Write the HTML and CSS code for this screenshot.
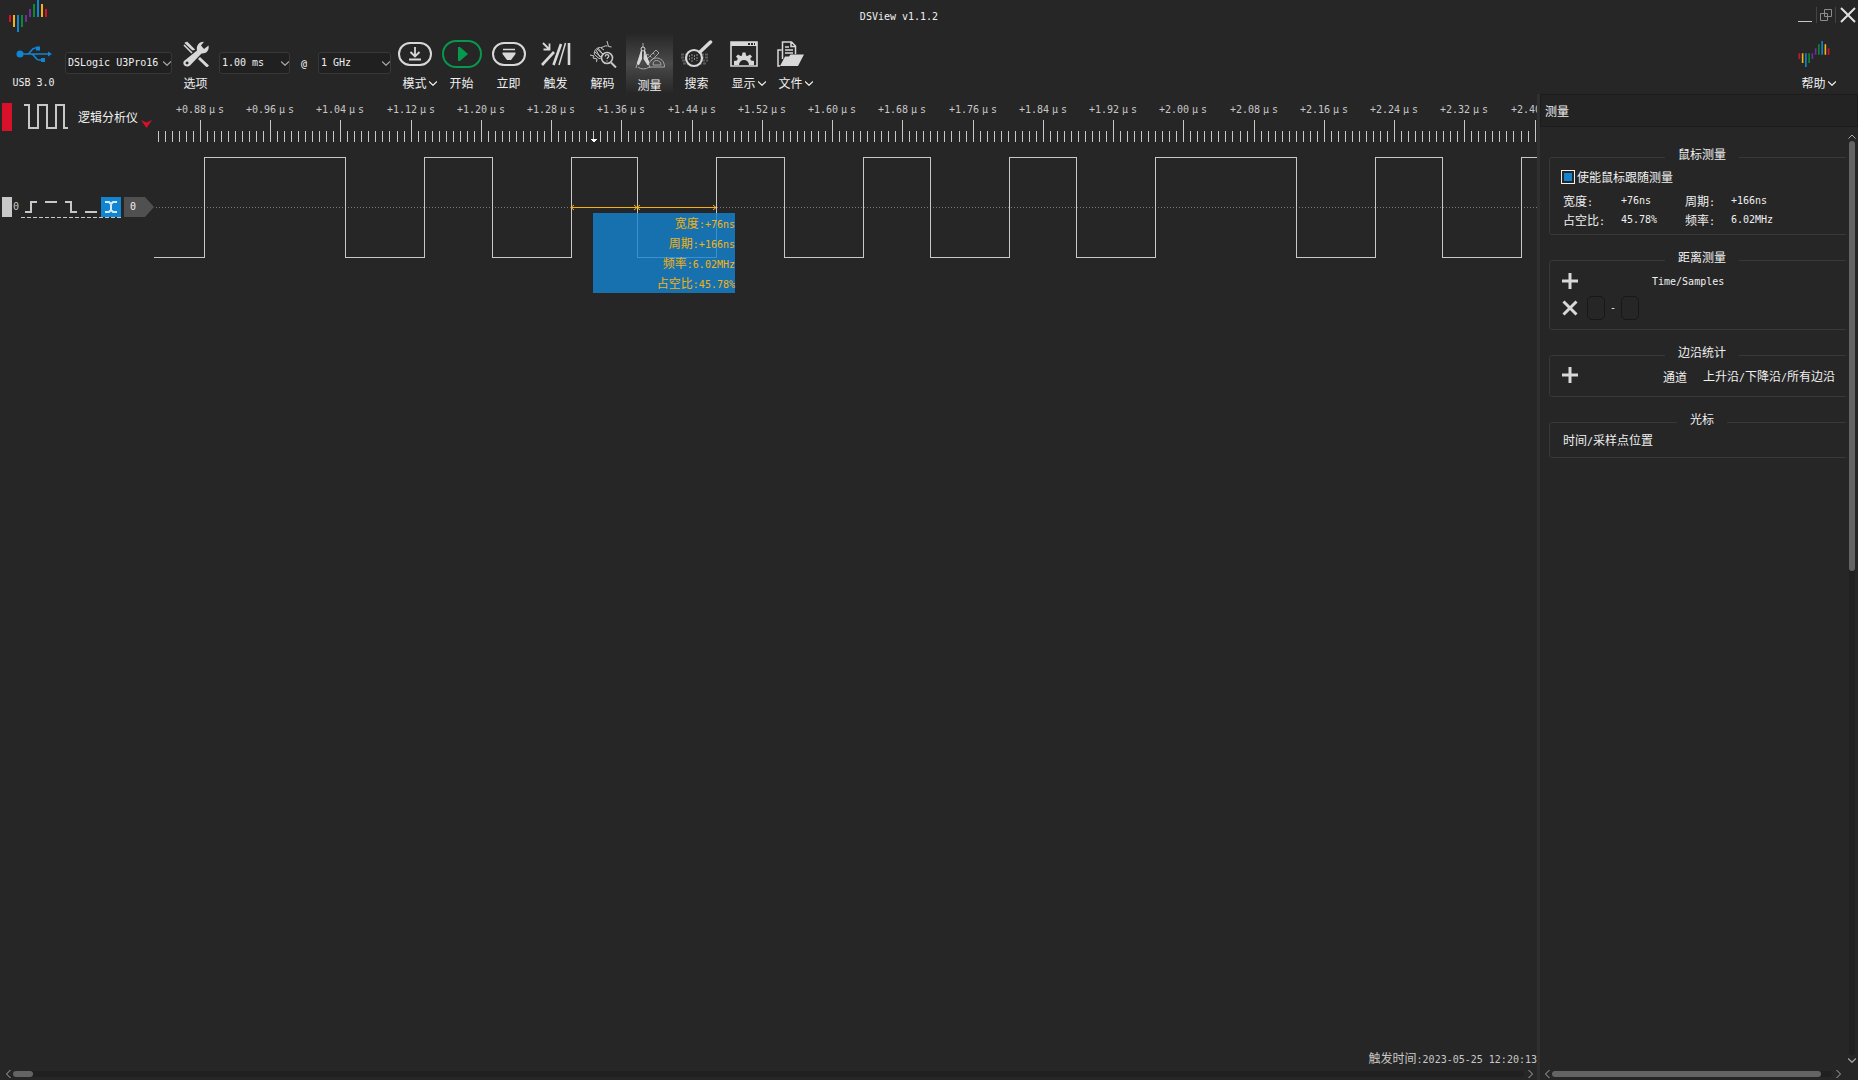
FILE: index.html
```html
<!DOCTYPE html>
<html lang="zh-CN">
<head>
<meta charset="utf-8">
<title>DSView v1.1.2</title>
<link rel="stylesheet" href="styles.css">
</head>
<body>
<svg class="defs" aria-hidden="true">
  <symbol id="logo" viewBox="0 0 38 32">
    <path fill="#d8112a" d="M0 15h2v7H0zM36 9h2v8h-2z"/>
    <path fill="#f5b11a" d="M4 15h2v12H4zM32 4h2v13h-2z"/>
    <path fill="#1185d1" d="M8 15h2v17H8zM28 0h2v17h-2z"/>
    <path fill="#0b8a2e" d="M12 15h2v12h-2zM24 4h2v13h-2z"/>
    <path fill="#6b2fa0" d="M16 15h2v7h-2zM20 9h2v8h-2z"/>
  </symbol>
  <symbol id="chev" viewBox="0 0 8 5"><path d="M0 .5 4 4.300 8 .5" fill="none" stroke="currentColor" stroke-width="1.200"/></symbol>
  <symbol id="plus" viewBox="0 0 16 16"><path d="M8 0v16M0 8h16" fill="none" stroke="#d8d8d8" stroke-width="3"/></symbol>
</svg>

<header class="titlebar">
  <svg class="app-logo" width="38" height="32"><use href="#logo"/></svg>
  <h1 class="n">DSView v1.1.2</h1>
  <div class="win-controls">
    <button class="win" aria-label="最小化"><svg width="14" height="16"><path d="M0 14.500h14" stroke="#c8c8c8"/></svg></button>
    <button class="win restore" aria-label="还原"><svg width="12" height="12" fill="none" stroke="#8c8c8c"><path d="M4.500 .5h7v7h-7zM.5 4.500h7v7h-7z"/></svg></button>
    <button class="win" aria-label="关闭"><svg width="16" height="16"><path d="M1 1l14 14M15 1 1 15" stroke="#e0e0e0" stroke-width="2"/></svg></button>
  </div>
</header>

<nav class="toolbar">
  <button class="tool">
    <span class="ico"><svg width="36" height="18" fill="none" stroke="#1185d1" stroke-width="1.500"><circle cx="4" cy="9" r="3.500" fill="#1185d1" stroke="none"/><path d="M4 9h29M11 9c4 0 4-6 8-6h2M15 9c4 0 4 6 8 6h2"/><path d="M32 6.500v5l4-2.500zM20 1.500h4v4h-4zM25 13h4v4h-4z" fill="#1185d1" stroke="none"/></svg></span>
    <span class="lbl n">USB 3.0</span>
  </button>
  <span class="combo device"><select aria-label="设备"><option>DSLogic U3Pro16</option></select><svg width="8" height="5"><use href="#chev"/></svg></span>
  <button class="tool">
    <span class="ico"><svg width="26" height="26" viewBox="0 0 26 26"><path d="M2 1.500 10 9M1 4l8 8M3.500 1l8 8" stroke="#d8d8d8" stroke-width="1.600"/><path d="M16 17l9 8.500" stroke="#d8d8d8" stroke-width="3"/><path fill="#d8d8d8" fill-rule="evenodd" d="M1 20 14 9.500C13 5 16 .5 21 .8L18 4.500l3 3.500 4.500-3.500c1 5-2 8.500-7 8L7 24.500C3.500 27.500-1.500 23.500 1 20zm3 .5a1.500 1.500 0 1 0 .1 3 1.500 1.500 0 0 0-.1-3z"/></svg></span>
    <span class="lbl">选项</span>
  </button>
  <span class="combo duration"><select aria-label="采样时长"><option>1.00 ms</option></select><svg width="8" height="5"><use href="#chev"/></svg></span>
  <span class="at n">@</span>
  <span class="combo rate"><select aria-label="采样率"><option>1 GHz</option></select><svg width="8" height="5"><use href="#chev"/></svg></span>

  <button class="tool">
    <span class="ico"><svg width="34" height="24" fill="none" stroke="#d8d8d8"><rect x="1" y="1" width="32" height="22" rx="11" stroke-width="2"/><path d="M17 5v9M12.500 10l4.500 4.500 4.500-4.500M11 17.500h12" stroke-width="1.800"/></svg></span>
    <span class="lbl">模式<svg class="more" width="8" height="5"><use href="#chev"/></svg></span>
  </button>
  <button class="tool">
    <span class="ico"><svg width="40" height="28" fill="none" stroke="#06984c"><rect x="1" y="1" width="38" height="26" rx="13" stroke-width="2"/><path d="M16 7v14h2l8-7-8-7z" fill="#06984c" stroke="none"/></svg></span>
    <span class="lbl">开始</span>
  </button>
  <button class="tool">
    <span class="ico"><svg width="34" height="24" fill="none" stroke="#d8d8d8"><rect x="1" y="1" width="32" height="22" rx="11" stroke-width="2"/><path d="M11 7.500h12" stroke-width="1.500"/><path d="M10.500 10.500h13V12L19 18h-4l-4.500-6z" fill="#d8d8d8" stroke="none"/></svg></span>
    <span class="lbl">立即</span>
  </button>
  <button class="tool">
    <span class="ico"><svg width="30" height="24" fill="none" stroke="#d8d8d8"><path d="M2 1l6 6M2.500 7.500H8.500V1.500" stroke-width="1.800"/><path d="M1 23 13 10M12.500 23 20 2M28 1v22" stroke-width="2.600"/><path d="M18 23 24.500 1" stroke-width="1.500"/></svg></span>
    <span class="lbl">触发</span>
  </button>
  <button class="tool">
    <span class="ico"><svg width="28" height="28" viewBox="0 0 28 28" fill="none" stroke="#c8c8c8"><path d="M18 1l1.500 5.500 3 .5M18.500 6c-3-1-5 2-7 1.500-4 0-7 3-6 7l4.500 4c2 0 3-1 4-2M1 15l4 1-1 2 4 1-.5 3M8 9l7 6M6 12l6 5M12 8l3 2M9 8l6 8M7 10l4 7"/><circle cx="18" cy="18" r="5.500" stroke-width="1.600" fill="#262626"/><path d="M22 22.500l5 5" stroke-width="2"/><path d="M16.300 16.500c0-2.500 3.500-2.300 3.500-.2 0 1.300-1.700 1.200-1.700 2.700M18 20.500v1" stroke-width="1.300"/></svg></span>
    <span class="lbl">解码</span>
  </button>
  <button class="tool active" aria-pressed="true">
    <span class="ico"><svg width="30" height="28" viewBox="0 0 30 28" fill="none" stroke="#a8a8a8"><path d="M8 1v4M1 26 6.500 8M15 26 9.500 8" stroke-width="1"/><path d="M6.500 9 2.500 21l1 2 3-6zM9.500 9l4.500 12-1 2-4-6z" fill="#d8d8d8" stroke="#d8d8d8"/><circle cx="8" cy="7" r="2" stroke="#d8d8d8"/><path d="M3 25c3 2.500 8 2.500 11 0M14 25h15.500c0-6-4-9-8-9s-6 2-7 5M18 23h8c0-3-2-4.500-4.500-4.500S18 20 18 23zM13 16l8-8 3 3-8 8M15 14l1.500 1.500M18 11l1.500 1.500M10 12l4 1"/></svg></span>
    <span class="lbl">测量</span>
  </button>
  <button class="tool">
    <span class="ico"><svg width="32" height="28" viewBox="0 0 32 28" fill="none"><path d="M0 14.500h27M0 17.500h27M1 20.500h26M2 23.500h24" stroke="#5c5c5c" stroke-width="2" stroke-dasharray="3 1"/><circle cx="13" cy="18" r="8" fill="#262626" stroke="#d8d8d8" stroke-width="2.200"/><path d="M8.500 15v6M11 14v8M13.500 15v6M16 14v7" stroke="#8c8c8c" stroke-dasharray="2 1"/><path d="M19 12 29.500 2" stroke="#d8d8d8" stroke-width="3.500" stroke-linecap="round"/></svg></span>
    <span class="lbl">搜索</span>
  </button>
  <button class="tool">
    <span class="ico"><svg width="28" height="26" viewBox="0 0 28 26"><path d="M1 1h26v24H1z" fill="none" stroke="#d8d8d8" stroke-width="1.600"/><path d="M1 1h26v4H1z" fill="#d8d8d8"/><path d="M18 3h7" stroke="#262626" stroke-width="2" stroke-dasharray="2 1"/><path fill="#d8d8d8" d="M4 24v-4l3-.5.8-1.700L6 15.500 8 13.500l2.500 1.500 1.500-.6.500-3h3l.5 3 1.500.6 2.500-1.500 2 2-1.800 2.300.8 1.700 3 .5v4h-5a5 5 0 0 0-10 0z"/></svg></span>
    <span class="lbl">显示<svg class="more" width="8" height="5"><use href="#chev"/></svg></span>
  </button>
  <button class="tool">
    <span class="ico"><svg width="28" height="26" viewBox="0 0 28 26"><path d="M5.500 18V1h9l4 4v8M14 1v4.500h4M8 6h4M8 9h8M8 12h8M4.500 9H1v16h2" fill="none" stroke="#d8d8d8" stroke-width="1.500"/><path d="M3 25 8 15.500h4l1.500-2H27L21 25z" fill="#d8d8d8"/></svg></span>
    <span class="lbl">文件<svg class="more" width="8" height="5"><use href="#chev"/></svg></span>
  </button>
  <button class="tool help">
    <span class="ico"><svg width="32" height="26"><use href="#logo"/></svg></span>
    <span class="lbl">帮助<svg class="more" width="8" height="5"><use href="#chev"/></svg></span>
  </button>
</nav>

<main class="workspace">
  <section class="view">
    <div class="signals">
      <div class="device-head">
        <span class="mark red"></span>
        <svg width="44" height="28" fill="none" stroke="#c8c8c8" stroke-width="2"><path d="M0 2h5v23h9V2h9v23h9V2h8v23h4"/></svg>
        <span>逻辑分析仪</span>
        <svg class="caret" width="11" height="8"><path d="M0 0l5.500 2.500L11 0 5.500 8z" fill="#d8112a"/></svg>
      </div>
      <svg id="ruler" class="ruler"></svg>
      <div class="channel">
        <span class="mark"></span><span class="index n">0</span>
        <svg width="100" height="21" fill="none" stroke="#c8c8c8" stroke-width="2"><path d="M80 0h20v20H80z" fill="#1185d1" stroke="none"/><path d="M4 15h6V5h6M24 5h12M44 5h6v10h6M64 15h12"/><path d="M84 5h4l2 2 2-2h4M84 15h4l2-2 2 2h4M90 6v8" stroke="#d5e8f5"/><path d="M0 20.500h100" stroke-width="1" stroke-dasharray="4 2"/></svg>
        <span class="tag n">0</span>
      </div>
      <div class="trace">
        <svg id="wave" class="wave"></svg>
        <div class="readout">
          <p>宽度<span class="n">:+76ns</span></p>
          <p>周期<span class="n">:+166ns</span></p>
          <p>频率<span class="n">:6.02MHz</span></p>
          <p>占空比<span class="n">:45.78%</span></p>
        </div>
      </div>
    </div>
    <p class="trigger-time">触发时间<span class="n">:2023-05-25 12:20:13</span></p>
    <div class="hscroll view-scroll">
      <svg class="left" width="5" height="8"><path d="M4.500 0 .5 4l4 4" fill="none" stroke="#a8a8a8"/></svg>
      <span class="track"><span class="thumb"></span></span>
      <svg width="5" height="8"><path d="M.5 0l4 4-4 4" fill="none" stroke="#a8a8a8"/></svg>
    </div>
  </section>

  <aside class="panel">
    <h2>测量</h2>
    <div class="panel-body">
      <div class="groups">
        <fieldset>
          <legend>鼠标测量</legend>
          <label class="follow"><input type="checkbox" checked>使能鼠标跟随测量</label>
          <dl class="values">
            <dt>宽度<span class="n">:</span></dt><dd class="n">+76ns</dd><dt>周期<span class="n">:</span></dt><dd class="n">+166ns</dd>
            <dt>占空比<span class="n">:</span></dt><dd class="n">45.78%</dd><dt>频率<span class="n">:</span></dt><dd class="n">6.02MHz</dd>
          </dl>
        </fieldset>
        <fieldset class="distance">
          <legend>距离测量</legend>
          <div class="row">
            <button class="sq" aria-label="添加距离测量"><svg width="16" height="16"><use href="#plus"/></svg></button>
            <span class="time-head n">Time/Samples</span>
          </div>
          <div class="row pair">
            <button class="sq" aria-label="删除"><svg width="16" height="16"><path d="M1.500 1.500l13 13M14.500 1.500l-13 13" stroke="#d8d8d8" stroke-width="3"/></svg></button>
            <button class="slot" aria-label="起始光标"></button><span class="dash n">-</span><button class="slot" aria-label="结束光标"></button>
          </div>
        </fieldset>
        <fieldset class="edges">
          <legend>边沿统计</legend>
          <div class="row">
            <button class="sq" aria-label="添加边沿统计"><svg width="16" height="16"><use href="#plus"/></svg></button>
            <span class="chan">通道</span><span class="kinds">上升沿<span class="n">/</span>下降沿<span class="n">/</span>所有边沿</span>
          </div>
        </fieldset>
        <fieldset class="cursors">
          <legend>光标</legend>
          <p>时间<span class="n">/</span>采样点位置</p>
        </fieldset>
      </div>
      <div class="vscroll">
        <svg width="8" height="5"><path d="M.5 4.500 4 1l3.500 3.500" fill="none" stroke="#a8a8a8"/></svg>
        <span class="track"><span class="thumb"></span></span>
        <svg width="8" height="5"><use href="#chev"/></svg>
      </div>
    </div>
    <div class="hscroll panel-scroll">
      <svg width="5" height="8"><path d="M4.500 0 .5 4l4 4" fill="none" stroke="#a8a8a8"/></svg>
      <span class="track"><span class="thumb"></span></span>
      <svg width="5" height="8"><path d="M.5 0l4 4-4 4" fill="none" stroke="#a8a8a8"/></svg>
    </div>
  </aside>
</main>
<script src="script.js"></script>
</body>
</html>
```

FILE: styles.css
```css
* { box-sizing: border-box; margin: 0; padding: 0; }
body {
  min-height: 100vh;
  display: flex;
  flex-direction: column;
  background: #262626;
  color: #f0f0f0;
  font: 12px/14px "Noto Sans CJK SC", sans-serif;
  overflow: hidden;
}
svg { flex: none; display: block; }
button { border: 0; background: none; color: inherit; font: inherit; }
.defs { position: absolute; width: 0; height: 0; }
.n, select { font-family: "DejaVu Sans Mono", "Liberation Mono", monospace; font-size: 10px; }

/* title bar */
.titlebar { display: flex; height: 33px; }
.app-logo { margin: 0 13px 0 9px; }
h1 { flex: 1; padding-right: 60px; text-align: center; font-weight: normal; line-height: 34px; }
.win-controls { display: flex; align-items: center; height: 30px; padding-right: 2px; gap: 4px; }
.win { display: flex; height: 16px; align-items: center; }
.win.restore { padding: 0 3px; border: solid #444; border-width: 0 1px; }

/* toolbar */
.toolbar { display: flex; height: 61px; padding: 0 21px 0 10px; align-items: center; }
.tool { width: 47px; height: 61px; padding-top: 5px; display: flex; flex-direction: column; align-items: center; gap: 6px; }
.tool.active { padding-top: 7px; background: linear-gradient(#262626, #4a4a4a 50%, #262626); }
.tool.help { margin-left: auto; }
.ico { height: 32px; display: flex; align-items: center; justify-content: center; }
.lbl { position: relative; white-space: nowrap; line-height: 14px; }
.more { position: absolute; left: 100%; top: 5px; margin-left: 2px; }
.combo { position: relative; height: 22px; margin-bottom: 2px; color: #a8a8a8; }
.combo svg { position: absolute; right: 1px; top: 9px; pointer-events: none; }
select { appearance: none; width: 100%; height: 22px; padding: 0 2px; background: #202020; color: #f0f0f0; border: 1px solid #383838; border-radius: 3px; }
.device { width: 107px; margin-left: 8px; }
.duration { width: 71px; }
.rate { width: 73px; }
.at { width: 28px; text-align: center; }

/* waveform view */
.workspace { flex: 1; display: flex; }
.view { flex: 1; min-width: 0; display: flex; flex-direction: column; }
.signals { display: grid; grid-template-columns: 154px minmax(0, 1fr); grid-template-rows: 48px 130px; }
.device-head, .channel { display: flex; align-items: center; padding-left: 2px; }
.device-head { padding-bottom: 2px; }
.device-head svg { margin: 0 10px 0 12px; }
.device-head .caret { margin: 14px 0 0 3px; }
.mark { width: 10px; height: 20px; background: #c8c8c8; }
.mark.red { height: 28px; background: #d8112a; }
.index { width: 9px; padding-left: 1px; color: #c8c8c8; }
.tag { width: 30px; height: 20px; margin-left: 3px; padding-left: 6px; line-height: 20px; background: #505050; clip-path: polygon(0 0, 70% 0, 100% 50%, 70% 100%, 0 100%); }
.ruler, .wave { width: 100%; height: 100%; overflow: hidden; }
.ruler text { fill: #c8c8c8; font: 10px "DejaVu Sans Mono", monospace; }
.ruler path, .wave path { fill: none; stroke: #c8c8c8; shape-rendering: crispEdges; }
.ruler .pointer { fill: #fff; stroke: none; }
.wave .zero { stroke: #787878; stroke-dasharray: 1 2; }
.wave .span { stroke: #f5b20f; shape-rendering: auto; }
.trace { position: relative; }
.readout { position: absolute; left: 439px; top: 71px; width: 142px; background: rgba(19, 132, 209, .8); color: #f5b20f; text-align: right; line-height: 20px; }
.readout p { height: 20px; }
.trigger-time { height: 20px; margin-top: auto; text-align: right; line-height: 20px; color: #c8c8c8; }

/* scroll bars */
.hscroll { display: flex; align-items: center; height: 12px; padding: 0 4px 0 6px; }
.track { flex: 1; background: #202020; border-radius: 3px; }
.thumb { display: block; background: #646464; border-radius: 3px; }
.hscroll .track, .hscroll .thumb { height: 6px; }
.hscroll .track { margin: 0 4px 0 2px; }
.view-scroll .thumb { width: 20px; }
.panel-scroll .thumb { width: 96%; }
.panel-scroll { padding: 0 17px 0 5px; }
.vscroll { display: flex; flex-direction: column; align-items: center; width: 12px; padding: 7px 0 5px; color: #a8a8a8; }
.vscroll .track { width: 6px; margin: 2px 0 3px; }
.vscroll .thumb { height: 47%; }

/* measurement panel */
.panel { width: 321px; border-left: 3px solid #303030; display: flex; flex-direction: column; }
h2 { height: 33px; padding-left: 4px; border: 1px solid #1c1c1c; background: #232323; font-size: 12px; font-weight: normal; line-height: 31px; }
.panel-body { flex: 1; display: flex; }
.groups { flex: 1; min-width: 0; overflow: hidden; display: flex; flex-direction: column; gap: 14px; padding: 19px 0 0 9px; }
fieldset { width: 306px; border: 1px solid #383838; border-radius: 3px; padding: 0 11px; }
legend { margin: 0 auto; padding: 0 13px 6px; line-height: 16px; }
.follow { display: flex; align-items: center; gap: 2px; margin-top: 2px; }
.follow input { appearance: none; width: 14px; height: 14px; border: 1px solid #f0f0f0; background: #1185d1; box-shadow: inset 0 0 0 2px #262626; }
.values { display: grid; grid-template-columns: 58px 64px 46px 1fr; grid-auto-rows: 19px; line-height: 19px; padding: 7px 2px 5px; }
.row { display: flex; align-items: center; height: 16px; }
.sq { width: 18px; height: 16px; padding-left: 1px; display: flex; }
.distance .row { margin-top: 2px; }
.time-head { margin-left: 73px; padding-top: 2px; }
.distance .pair { height: 24px; margin: 7px 0 9px; }
.slot { width: 18px; height: 24px; margin-left: 8px; border: 1px solid #181818; border-radius: 5px; }
.dash { margin-left: 5px; }
.dash + .slot { margin-left: 5px; }
.edges .row { margin: 1px 0 13px; }
.chan, .kinds { padding-top: 4px; }
.chan { margin: 0 16px 0 84px; }
.cursors p { padding: 0 2px 8px; }
```

FILE: script.js
```js
const NS = "http://www.w3.org/2000/svg";

function add(parent, name, attrs, text) {
  const el = document.createElementNS(NS, name);
  for (const key in attrs) el.setAttribute(key, attrs[key]);
  if (text) el.textContent = text;
  parent.appendChild(el);
  return el;
}

// Time scale: ten ticks to each labelled division of 0.08 microseconds.
const DIVISION = 70.25;
const FIRST_LABEL = 46;

function drawRuler() {
  const ruler = document.getElementById("ruler");
  const width = ruler.clientWidth;
  ruler.textContent = "";
  let d = "";
  for (let i = -6; ; i++) {
    const x = Math.floor(FIRST_LABEL + i * DIVISION / 10 + 0.3);
    if (x >= width) break;
    d += `M${x + 0.5} ${i % 10 ? 37 : 26}V49`;
    if (i % 10 === 0) {
      const label = add(ruler, "text", { x: x - 24, y: 19 }, "+" + (0.88 + i * 0.008).toFixed(2));
      // The unit is left off where it would fall outside the view.
      if (x + 24 < width) {
        add(label, "tspan", { x: x + 9 }, "μ");
        add(label, "tspan", { x: x + 18 }, "s");
      }
    }
  }
  add(ruler, "path", { d });
  add(ruler, "path", { d: "M436.500 45h7l-2.500 3h-2z", class: "pointer" });
}

// Level changes of channel 0, alternating rise and fall.
const EDGES = [50, 191, 270, 338, 417, 483, 562, 630, 709, 776, 855, 922, 1001, 1142, 1221, 1288, 1367];
const HIGH = 15.5, LOW = 115.5, MIDDLE = 65.5;

function drawWave() {
  const wave = document.getElementById("wave");
  const width = wave.clientWidth;
  wave.textContent = "";
  add(wave, "path", { d: `M2 ${MIDDLE}H${width}`, class: "zero" });
  let d = `M0 ${LOW}`;
  EDGES.forEach((x, i) => { d += `H${x + 0.5}V${i % 2 ? LOW : HIGH}`; });
  add(wave, "path", { d: d + `H${width}` });
  add(wave, "path", {
    d: "M417 65.500H562M420 63l-3 2.500 3 2.500M480 63l3 2.500-3 2.500M486 63l-3 2.500 3 2.500M559 63l3 2.500-3 2.500",
    class: "span"
  });
}

function draw() { drawRuler(); drawWave(); }
window.addEventListener("resize", draw);
draw();
```
